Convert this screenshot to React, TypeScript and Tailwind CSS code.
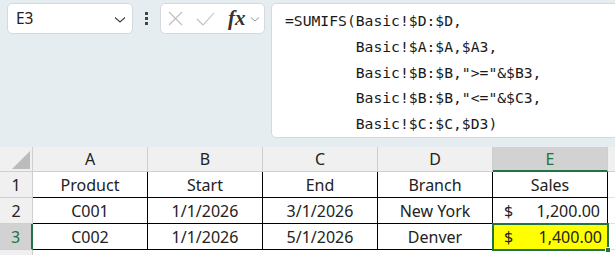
import React from "react";

const font = { fontFamily: '"Noto Sans", "Open Sans", sans-serif' };
const mono = { fontFamily: '"DejaVu Sans Mono", "Liberation Mono", monospace' };

const cols = ["A", "B", "C", "D", "E"];
const rows = [
  ["Product", "Start", "End", "Branch", "Sales"],
  ["C001", "1/1/2026", "3/1/2026", "New York", "1,200.00"],
  ["C002", "1/1/2026", "5/1/2026", "Denver", "1,400.00"],
];

const formula = [
  "=SUMIFS(Basic!$D:$D,",
  "        Basic!$A:$A,$A3,",
  '        Basic!$B:$B,">="&$B3,',
  '        Basic!$B:$B,"<="&$C3,',
  "        Basic!$C:$C,$D3)",
];

export default function App() {
  return (
    <div className="w-[615px] h-[255px] overflow-hidden bg-white text-[#222]" style={font}>
      <div className="h-[147px] bg-[#e6edf1] flex items-start pt-[3px] pl-[7px]">
        <div className="shrink-0 w-[126px] h-[31px] bg-white border border-[#d3d9de] rounded-[5px] flex items-center justify-between pl-[8px] pr-[6px]">
          <span className="text-[15.5px] text-[#222]">E3</span>
          <svg width="12" height="8" viewBox="0 0 12 8" className="mt-[2px]">
            <path d="M1 1.5 L6 6 L11 1.5" fill="none" stroke="#444" strokeWidth="1.1" />
          </svg>
        </div>
        <div className="shrink-0 w-[27px] h-[31px] flex flex-col items-center justify-center gap-[2px]">
          <div className="w-[3px] h-[3px] bg-[#444]" />
          <div className="w-[3px] h-[3px] bg-[#444]" />
          <div className="w-[3px] h-[3px] bg-[#444]" />
        </div>
        <div className="shrink-0 w-[105px] h-[31px] bg-white border border-[#d3d9de] rounded-[5px] flex items-center pl-[7px]">
          <svg width="15" height="15" viewBox="0 0 15 15">
            <path d="M1 1 L14 14 M14 1 L1 14" fill="none" stroke="#bdbdbd" strokeWidth="1.1" />
          </svg>
          <svg width="19" height="14" viewBox="0 0 19 14" className="ml-[13px]">
            <path d="M1 7 L7 13 L18 1" fill="none" stroke="#bdbdbd" strokeWidth="1.1" />
          </svg>
          <span
            className="ml-[13px] text-[21px] italic font-bold text-[#333] leading-none"
            style={{ fontFamily: '"Liberation Serif", "DejaVu Serif", serif' }}
          >
            fx
          </span>
          <svg width="10" height="7" viewBox="0 0 10 7" className="ml-[4px] mt-[2px]">
            <path d="M1 1.5 L5 5 L9 1.5" fill="none" stroke="#999" strokeWidth="1" />
          </svg>
        </div>
        <div className="shrink-0 ml-[6px] w-[360px] h-[135px] bg-white border border-[#d3d9de] rounded-[5px] pl-[13px] pt-[4px]">
          {formula.map((l, i) => (
            <div key={i} className="h-[25.8px] leading-[25.8px] text-[14.7px] text-[#1a1a1a] whitespace-pre" style={mono}>
              {l}
            </div>
          ))}
        </div>
      </div>

      <div className="grid grid-cols-[33px_repeat(5,115px)_1fr] text-[16px]">
        <div className="h-[25px] bg-[#f0f0f0] border-r border-b border-[#cfcfcf] relative">
          <svg width="20" height="20" viewBox="0 0 20 20" className="absolute left-[11px] top-[3px]">
            <path d="M19 1 L19 19 L1 19 Z" fill="#bcbcbc" />
          </svg>
        </div>
        {cols.map((c) =>
          c === "E" ? (
            <div key={c} className="h-[25px] bg-[#d2d2d2] border-b-2 border-[#217346] border-r border-r-[#cfcfcf] flex items-center justify-center text-[#217346]">
              {c}
            </div>
          ) : (
            <div key={c} className="h-[25px] bg-[#f0f0f0] border-r border-b border-[#cfcfcf] flex items-center justify-center">
              {c}
            </div>
          )
        )}
        <div className="h-[25px] bg-[#f0f0f0] border-b border-[#cfcfcf]" />

        {rows.map((r, ri) => {
          const rowNum = ri + 1;
          const sel = rowNum === 3;
          return (
            <React.Fragment key={ri}>
              <div
                className={
                  "h-[26px] flex items-center justify-center border-b " +
                  (sel
                    ? "bg-[#d2d2d2] text-[#217346] border-r-2 border-r-[#217346] border-b-[#cfcfcf]"
                    : "bg-[#f0f0f0] border-r border-[#cfcfcf]")
                }
              >
                {rowNum}
              </div>
              {r.map((v, ci) => {
                const isE = ci === 4;
                const money = isE && ri > 0;
                if (money && sel) {
                  return (
                    <div key={ci} className="h-[26px] relative border-b border-r border-black">
                      <div className="absolute -left-[1px] -top-[1px] w-[117px] h-[28px] border-2 border-[#217346] bg-[#ffff00] flex items-center justify-between pl-[10px] pr-[5px]">
                        <span>$</span>
                        <span>{v}</span>
                      </div>
                      <div className="absolute -right-[4px] -bottom-[4px] w-[6px] h-[6px] bg-[#217346] border border-white" />
                    </div>
                  );
                }
                return (
                  <div
                    key={ci}
                    className={
                      "h-[26px] border-b border-r border-black flex items-center " +
                      (money ? "justify-between pl-[11px] pr-[7px]" : "justify-center")
                    }
                  >
                    {money ? (
                      <>
                        <span>$</span>
                        <span>{v}</span>
                      </>
                    ) : (
                      v
                    )}
                  </div>
                );
              })}
              <div className="h-[26px] border-b border-[#e1e1e1]" />
            </React.Fragment>
          );
        })}
        <div className="h-[10px] bg-[#f0f0f0] border-r border-[#cfcfcf]" />
        <div className="col-span-6 h-[10px]" />
      </div>
    </div>
  );
}
